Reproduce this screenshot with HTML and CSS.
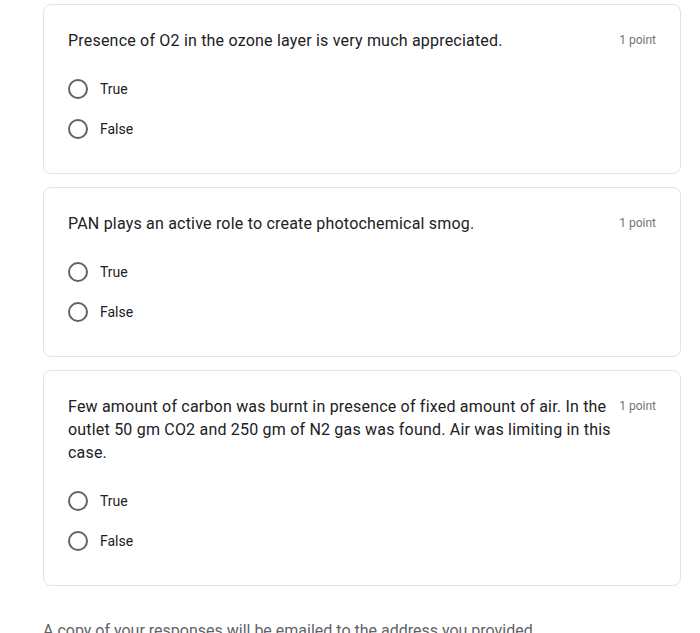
FILE: index.html
```html
<!DOCTYPE html>
<html>
<head>
<meta charset="utf-8">
<link rel="stylesheet" href="styles.css">
</head>
<body>
<div class="page">
  <div class="card">
    <div class="head">
      <div class="question">Presence of O2 in the ozone layer is very much appreciated.</div>
      <div class="points">1 point</div>
    </div>
    <div class="options">
      <div class="option"><span class="radio"></span><span class="label">True</span></div>
      <div class="option"><span class="radio"></span><span class="label">False</span></div>
    </div>
  </div>
  <div class="card">
    <div class="head">
      <div class="question">PAN plays an active role to create photochemical smog.</div>
      <div class="points">1 point</div>
    </div>
    <div class="options">
      <div class="option"><span class="radio"></span><span class="label">True</span></div>
      <div class="option"><span class="radio"></span><span class="label">False</span></div>
    </div>
  </div>
  <div class="card">
    <div class="head">
      <div class="question">Few amount of carbon was burnt in presence of fixed amount of air. In the outlet 50 gm CO2 and 250 gm of N2 gas was found. Air was limiting in this case.</div>
      <div class="points">1 point</div>
    </div>
    <div class="options">
      <div class="option"><span class="radio"></span><span class="label">True</span></div>
      <div class="option"><span class="radio"></span><span class="label">False</span></div>
    </div>
  </div>
  <div class="footer">A copy of your responses will be emailed to the address you provided.</div>
</div>
</body>
</html>
```
FILE: styles.css
```css
html, body {
  margin: 0;
  padding: 0;
  background: #ffffff;
}
body {
  font-family: Roboto, "Liberation Sans", sans-serif;
  color: #202124;
}
.page {
  padding: 4px 19px 0 43px;
  display: flex;
  flex-direction: column;
  gap: 13px;
}
.card {
  border: 1px solid #e2e2e2;
  border-radius: 8px;
  padding: 24px;
  background: #fff;
}
.head {
  display: flex;
  justify-content: space-between;
  align-items: flex-start;
}
.question {
  width: 549px;
  font-size: 16px;
  line-height: 23px;
  letter-spacing: 0.2px;
}
.points {
  flex: none;
  font-size: 12px;
  line-height: 23px;
  color: #70757a;
}
.options {
  margin-top: 17px;
  display: flex;
  flex-direction: column;
}
.option {
  height: 40px;
  display: flex;
  align-items: center;
  gap: 12px;
}
.radio {
  width: 16px;
  height: 16px;
  border: 2px solid #5f6368;
  border-radius: 50%;
  flex: none;
}
.label {
  font-size: 14px;
  color: #202124;
}
.footer {
  margin-top: 20px;
  font-size: 16px;
  color: #5f6368;
  line-height: 24px;
}
```
